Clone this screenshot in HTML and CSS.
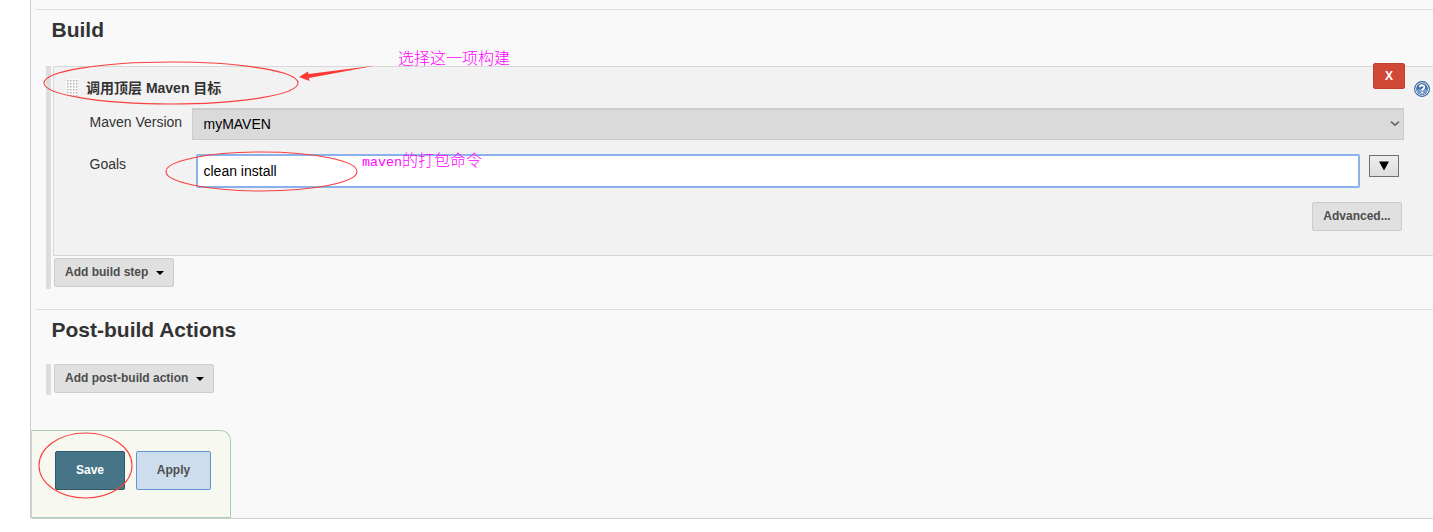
FILE: index.html
```html
<!DOCTYPE html>
<html lang="zh-CN">
<head>
<meta charset="utf-8">
<title>Build configuration</title>
<link rel="stylesheet" href="styles.css">
</head>
<body>
<main class="panel">
  <section class="section build">
    <h2 class="heading">Build</h2>
    <div class="steps">
      <div class="rail"></div>
      <div class="column">
        <div class="step">
          <div class="step-head">
            <svg class="grip" width="12" height="18">
              <defs><pattern id="dots" width="3" height="3" patternUnits="userSpaceOnUse"><rect width="3" height="3" fill="#fafafa"/><rect x="1" y="1" width="1.5" height="1.5" fill="#b4b4b0"/></pattern></defs>
              <rect width="12" height="18" fill="url(#dots)"/>
            </svg>
            <strong class="step-title">调用顶层 Maven 目标</strong>
            <button class="delete">X</button>
            <svg class="help" width="16" height="16" viewBox="0 0 16 16">
              <circle cx="8" cy="8" r="7.4" fill="#fff" stroke="#2f5f9c" stroke-width="1.1"/>
              <circle cx="8" cy="8" r="5.9" fill="#3f6ba5"/>
              <path d="M2.3 9A5.9 5.9 0 0 0 13.7 9Q8 6.500 2.300 9Z" fill="#7d9cc6"/>
              <path d="M5.800 6.300C5.800 3.500 10.400 3.600 10.300 6.200C10.200 7.800 8.200 7.800 8.200 9.600M8.200 10.800V12.500" fill="none" stroke="#fff" stroke-width="1.800"/>
            </svg>
          </div>
          <div class="row version">
            <label class="label">Maven Version</label>
            <div class="select"><span>myMAVEN</span>
              <svg width="10" height="7" viewBox="0 0 10 7"><path d="M1 1.700L5 5.200L9 1.700" fill="none" stroke="#666" stroke-width="1.600"/></svg>
            </div>
          </div>
          <div class="row goals">
            <label class="label">Goals</label>
            <div class="input">clean install</div>
            <button class="expand"><svg width="10" height="10"><path d="M0 0.500H10L5 9.500Z"/></svg></button>
          </div>
          <div class="row advanced"><button class="button">Advanced...</button></div>
        </div>
        <button class="button menu">Add build step<svg width="8" height="4"><path d="M0 0H8L4 4Z"/></svg></button>
      </div>
    </div>
  </section>
  <section class="section post">
    <h2 class="heading">Post-build Actions</h2>
    <div class="steps">
      <div class="rail"></div>
      <div class="column">
        <button class="button menu">Add post-build action<svg width="8" height="4"><path d="M0 0H8L4 4Z"/></svg></button>
      </div>
    </div>
  </section>
  <footer class="actions">
    <button class="save">Save</button>
    <button class="apply">Apply</button>
  </footer>
</main>
<svg class="marks" width="1433" height="532">
  <g fill="none" stroke="#f8413f" stroke-width="1.1">
    <ellipse cx="171" cy="83" rx="127" ry="21"/>
    <ellipse cx="261.500" cy="171.500" rx="95.500" ry="19.500"/>
    <ellipse cx="85.500" cy="465.500" rx="46.500" ry="32.500"/>
  </g>
  <path d="M299 77L308 71.500L308.500 74L376 65.500L309 78L309.500 81Z" fill="#ff3835"/>
</svg>
<div class="note note-step">选择这一项构建</div>
<div class="note note-goals"><span class="mono">maven</span>的打包命令</div>
</body>
</html>
```
FILE: styles.css
```css
* { box-sizing: border-box; }
body {
  margin: 0;
  height: 532px;
  overflow: hidden;
  position: relative;
  background: #fff;
  color: #333;
  font: 14px/20px "Liberation Sans", "Noto Sans CJK SC", sans-serif;
}
button { font-family: inherit; margin: 0; padding: 0; }
svg { display: block; flex: none; }
.panel {
  height: 519px;
  margin-left: 30px;
  border: solid #ccc;
  border-width: 0 0 1px 1px;
  border-bottom-left-radius: 3px;
  background: #f9f9f9;
  padding-top: 9px;
  display: flex;
  flex-direction: column;
}
.section { margin-left: 5px; border-top: 1px solid #ddd; }
.build { height: 300px; }
.post { height: 121px; }
.heading { margin: 7px 0 0 15.5px; font-size: 21px; line-height: 25px; height: 25px; }
.steps { display: flex; margin: 24px 0 0 10px; }
.rail { width: 5px; background: #ddd; }
.column { flex: 1; padding-left: 2px; height: 223px; }
.post .steps { margin-top: 22px; }
.post .column { height: 31px; }
.step {
  height: 190px;
  border: solid #d8d8d8;
  border-width: 1px 0 1px 1px;
  background: #f2f2f2;
}
.step-head { display: flex; height: 41px; padding-left: 12px; }
.grip { margin-top: 12px; }
.step-title { flex: 1; margin: 11px 0 0 8px; }
.delete {
  width: 32px;
  height: 26px;
  margin-top: -4px;
  border: 1px solid #c43f30;
  border-radius: 2px;
  background: #d14836;
  color: #fff;
  font-size: 12px;
  font-weight: bold;
}
.help { margin: 14px 3px 0 9px; }
.row { display: flex; }
.label { padding-left: 35.5px; width: 138px; }
.version .label { padding-top: 4px; }
.select {
  width: 1212px;
  height: 32px;
  border: 1px solid #ccc;
  border-top-width: 2px;
  background: #dadada;
  color: #000;
  padding: 0 3px 2px 10.5px;
  display: flex;
  align-items: center;
  justify-content: space-between;
}
.goals { margin-top: 14px; height: 34px; }
.goals .label { width: 142px; }
.input {
  width: 1164px;
  height: 34px;
  border: 2px solid #8bb1ed;
  border-radius: 2px;
  background: #fff;
  color: #000;
  padding: 5px 5.5px;
}
.expand {
  width: 30px;
  height: 22px;
  margin: 1px 0 0 9px;
  border: 1px solid #707070;
  background: linear-gradient(#eee, #ddd);
  display: flex;
  justify-content: center;
  align-items: center;
}
.advanced { justify-content: flex-end; padding: 14px 31px 0 0; }
.advanced .button { width: 90px; }
.button {
  height: 29px;
  padding: 0 10px 2px;
  border: 1px solid #ccc;
  border-radius: 2px;
  background: #e0e0e0;
  color: #4d4d4d;
  font-size: 12px;
  font-weight: bold;
}
.menu { display: flex; align-items: center; gap: 8px; margin: 2px 0 0 1px; padding-right: 9px; }
.menu svg { margin-top: 3px; fill: #000; }
.post .menu { margin-top: 0; }
.actions {
  width: 200px;
  height: 88px;
  border: 1px solid #aacfb8;
  border-left-color: #c5d8ca;
  border-radius: 0 10px 0 0;
  background: #f7f8ef;
  padding: 20px 0 0 23px;
  display: flex;
  gap: 11px;
}
.save, .apply { height: 39px; padding-bottom: 2px; font-size: 12px; font-weight: bold; border-radius: 2px; }
.save { width: 70px; border: 1px solid #315768; background: #457587; color: #fff; }
.apply { width: 75px; border: 1px solid #5f98d1; background: #cddded; color: #4d4d4d; }
.marks { position: absolute; left: 0; top: 0; }
.note {
  position: absolute;
  color: #f0f;
  font: 300 16px/20px "Noto Sans CJK SC", sans-serif;
  white-space: nowrap;
}
.note-step { left: 398px; top: 47px; }
.note-goals { left: 362px; top: 149px; }
.mono { font: 13.33px/20px "Liberation Mono", monospace; }
```
